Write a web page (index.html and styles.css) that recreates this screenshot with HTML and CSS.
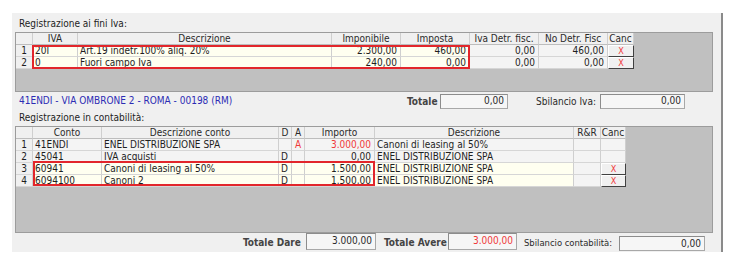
FILE: index.html
```html
<!DOCTYPE html>
<html lang="it">
<head>
<meta charset="utf-8">
<title>Registrazione</title>
<link rel="stylesheet" href="styles.css">
</head>
<body>
<div class="panel">
  <div class="caption">Registrazione ai fini Iva:</div>
  <div class="grid g1">
    <div class="row g1cols head">
      <div class="c rn"></div><div class="c">IVA</div><div class="c">Descrizione</div><div class="c">Imponibile</div><div class="c">Imposta</div><div class="c">Iva Detr. fisc.</div><div class="c">No Detr. Fisc</div><div class="c">Canc</div>
    </div>
    <div class="row g1cols">
      <div class="c rn">1</div><div class="c ed">20I</div><div class="c ed">Art.19 indetr.100% aliq. 20%</div><div class="c ed num">2.300,00</div><div class="c ed num">460,00</div><div class="c ro num">0,00</div><div class="c ro num">460,00</div><div class="c btn">X</div>
    </div>
    <div class="row g1cols">
      <div class="c rn">2</div><div class="c ed">0</div><div class="c ed">Fuori campo Iva</div><div class="c ed num">240,00</div><div class="c ed num">0,00</div><div class="c ro num">0,00</div><div class="c ro num">0,00</div><div class="c btn">X</div>
    </div>
    <div class="mark mark1"></div>
  </div>
  <div class="inforow">
    <div class="addr">41ENDI - VIA OMBRONE 2 - ROMA - 00198 (RM)</div>
    <div class="lbl bold w-totale">Totale</div>
    <div class="box w-box1">0,00</div>
    <div class="lbl w-sbil">Sbilancio Iva:</div>
    <div class="box w-box2">0,00</div>
  </div>
  <div class="caption caption2">Registrazione in contabilità:</div>
  <div class="grid g2">
    <div class="row g2cols head">
      <div class="c rn"></div><div class="c">Conto</div><div class="c">Descrizione conto</div><div class="c">D</div><div class="c">A</div><div class="c">Importo</div><div class="c">Descrizione</div><div class="c">R&amp;R</div><div class="c">Canc</div>
    </div>
    <div class="row g2cols">
      <div class="c rn">1</div><div class="c ro">41ENDI</div><div class="c ro">ENEL DISTRIBUZIONE SPA</div><div class="c ro"></div><div class="c ro red ctr">A</div><div class="c ro num red">3.000,00</div><div class="c ro">Canoni di leasing al 50%</div><div class="c ro"></div><div class="c ro"></div>
    </div>
    <div class="row g2cols">
      <div class="c rn">2</div><div class="c ro">45041</div><div class="c ro">IVA acquisti</div><div class="c ro">D</div><div class="c ro"></div><div class="c ro num">0,00</div><div class="c ro">ENEL DISTRIBUZIONE SPA</div><div class="c ro"></div><div class="c ro"></div>
    </div>
    <div class="row g2cols">
      <div class="c rn">3</div><div class="c ed">60941</div><div class="c ed">Canoni di leasing al 50%</div><div class="c ed">D</div><div class="c ed"></div><div class="c ed num">1.500,00</div><div class="c ed">ENEL DISTRIBUZIONE SPA</div><div class="c ro"></div><div class="c btn">X</div>
    </div>
    <div class="row g2cols">
      <div class="c rn">4</div><div class="c ed">6094100</div><div class="c ed">Canoni 2</div><div class="c ed">D</div><div class="c ed"></div><div class="c ed num">1.500,00</div><div class="c ed">ENEL DISTRIBUZIONE SPA</div><div class="c ro"></div><div class="c btn">X</div>
    </div>
    <div class="mark mark2"></div>
  </div>
  <div class="footer">
    <div class="lbl bold w-dare">Totale Dare</div>
    <div class="box w-box3">3.000,00</div>
    <div class="lbl bold w-avere">Totale Avere</div>
    <div class="box red w-box4">3.000,00</div>
    <div class="lbl w-sbil2">Sbilancio contabilità:</div>
    <div class="box w-box5">0,00</div>
  </div>
</div>
</body>
</html>
```

FILE: styles.css
```css
html, body {
  margin: 0;
  padding: 0;
  background: #ffffff;
}
body {
  font-family: "DejaVu Sans Condensed", "DejaVu Sans", sans-serif;
  font-size: 10px;
  color: #1e1e1e;
}
.panel {
  margin: 13px 0 0 12px;
  width: 706px;
  height: 239px;
  background: #f0f0f0;
  border-right: 2px solid #8a8a8a;
  padding-left: 3px;
  box-sizing: content-box;
  display: flex;
  flex-direction: column;
}
.caption {
  height: 19px;
  box-sizing: border-box;
  padding: 5px 0 0 4px;
  line-height: 12px;
}
.caption2 {
  height: 16px;
  padding-top: 2px;
}
.grid {
  position: relative;
  width: 698px;
  box-sizing: border-box;
  background: #c0c0c0;
  border: 1px solid #9c9c9c;
}
.g1 { height: 60px; }
.g2 { height: 107px; }
.row {
  display: grid;
  height: 12px;
}
.g1cols { grid-template-columns: 17px 45px 254px 69px 69px 69px 69px 26px; }
.g2cols { grid-template-columns: 17px 69px 177px 13px 13px 70px 199px 27px 25px; }
.c {
  box-sizing: border-box;
  border-right: 1px solid #cfcfcf;
  border-bottom: 1px solid #d6d6d6;
  line-height: 11px;
  padding: 0 2px;
  white-space: nowrap;
  overflow: hidden;
}
.head .c {
  background: #f0f0f0;
  text-align: center;
  padding: 0;
  border-bottom-color: #bdbdbd;
  color: #2a2a2a;
}
.rn {
  background: #f0f0f0;
  text-align: center;
  padding: 0;
}
.ed { background: #fffff0; }
.ro { background: #f4f4f4; }
.num { text-align: right; padding-right: 3px; }
.ctr { text-align: center; padding: 0; }
.red { color: #f03a3a; }
.btn {
  background: #f0f0f0;
  border-top: 1px solid #ffffff;
  border-left: 1px solid #ffffff;
  border-right: 1px solid #404040;
  border-bottom: 1px solid #404040;
  color: #f03a3a;
  text-align: center;
  padding: 0;
  line-height: 10px;
  font-size: 9px;
}
.mark {
  position: absolute;
  box-sizing: border-box;
  border: 2px solid #e2262b;
}
.mark1 { left: 16px; top: 12px; width: 438px; height: 24px; }
.mark2 { left: 17px; top: 34px; width: 342px; height: 25px; }
.inforow {
  height: 18px;
  display: flex;
  align-items: center;
}
.addr {
  width: 392px;
  flex-shrink: 0;
  padding-left: 4px;
  box-sizing: border-box;
  color: #2c2cb4;
  margin-top: -2px;
}
.lbl {
  white-space: nowrap;
  color: #2a2a2a;
  flex-shrink: 0;
}
.bold { font-weight: bold; color: #444444; }
.box {
  box-sizing: border-box;
  flex-shrink: 0;
  height: 15px;
  line-height: 12px;
  text-align: right;
  padding-right: 3px;
  background: #f6f6f6;
  border: 1px solid #a8a8a8;
  border-top-color: #8c8c8c;
  border-left-color: #8c8c8c;
  color: #2a2a2a;
}
.box.red { color: #f03a3a; }
.w-totale { width: 33px; }
.w-box1 { width: 68px; }
.w-sbil { width: 64px; margin-left: 28px; }
.w-box2 { width: 85px; }
.footer {
  height: 19px;
  display: flex;
  align-items: flex-start;
}
.footer .lbl { line-height: 19px; }
.footer .box { height: 17px; line-height: 13px; }
.w-dare { margin-left: 228px; width: 63px; }
.w-box3 { width: 70px; }
.w-avere { margin-left: 8px; width: 64px; }
.w-box4 { width: 69px; }
.w-sbil2 { margin-left: 7px; width: 95px; font-size: 9.4px; }
.w-box5 { width: 86px; margin-top: 3px; height: 15px !important; }
```
